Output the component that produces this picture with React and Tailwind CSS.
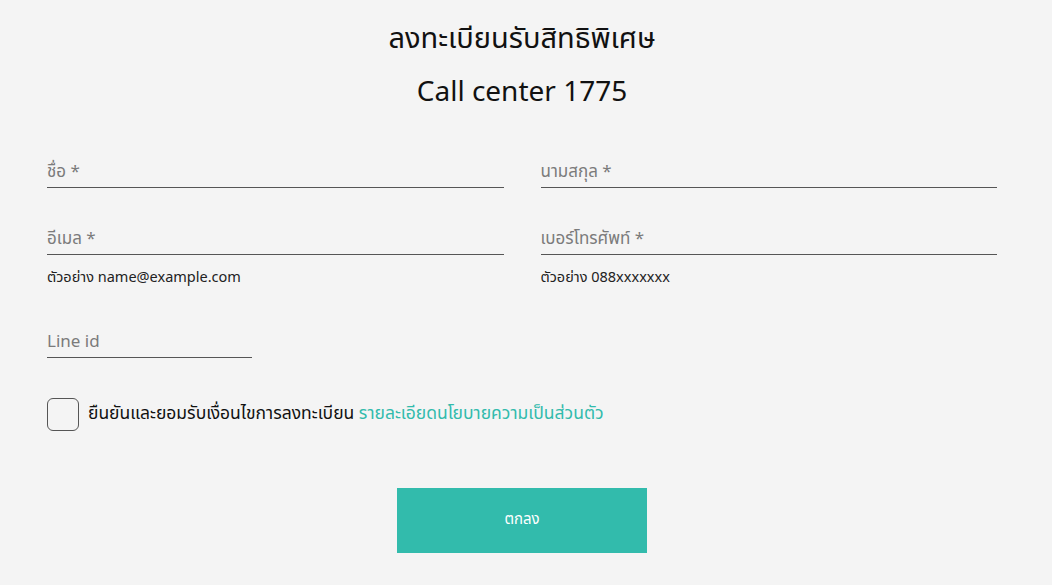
import React from 'react';

const font = { fontFamily: '"Noto Sans Thai", "Noto Sans", "DejaVu Sans", sans-serif' };

const Field = ({ label, hint, className = '' }) => (
  <div className={className}>
    <div className="h-[47px] border-b border-[#555] flex items-end pb-[6px]">
      <span className="text-[17px] text-[#7b7b7b] leading-none">{label}</span>
    </div>
    {hint && <p className="mt-[16px] text-[14.5px] text-[#222] leading-none">{hint}</p>}
  </div>
);

export default function App() {
  return (
    <div className="min-h-[585px] bg-[#f4f4f4] pl-[47px] pr-[55px]" style={font}>
      <div className="text-center pt-[19px] text-[#111]">
        <h1 className="text-[29px] leading-[40px]">ลงทะเบียนรับสิทธิพิเศษ</h1>
        <h2 className="text-[28px] leading-[40px] mt-[14px]">Call center 1775</h2>
      </div>

      <form className="mt-[28px]">
        <div className="grid grid-cols-2 gap-x-[37px]">
          <Field label="ชื่อ *" />
          <Field label="นามสกุล *" />
          <Field label="อีเมล *" hint="ตัวอย่าง name@example.com" className="mt-[20px]" />
          <Field label="เบอร์โทรศัพท์ *" hint="ตัวอย่าง 088xxxxxxx" className="mt-[20px]" />
        </div>
        <Field label="Line id" className="w-[205px] mt-[25px]" />

        <label className="flex items-center gap-[9px] mt-[40px]">
          <span className="w-[32px] h-[33px] rounded-[6px] border border-[#555] bg-[#f4f4f4]" />
          <span className="text-[17.5px] text-[#111]">
            ยืนยันและยอมรับเงื่อนไขการลงทะเบียน{' '}
            <a className="text-[#32bbac]">รายละเอียดนโยบายความเป็นส่วนตัว</a>
          </span>
        </label>

        <div className="flex justify-center mt-[57px] pb-[32px]">
          <button type="button" className="w-[250px] h-[65px] bg-[#32bbac] text-white text-[15px]">
            ตกลง
          </button>
        </div>
      </form>
    </div>
  );
}
